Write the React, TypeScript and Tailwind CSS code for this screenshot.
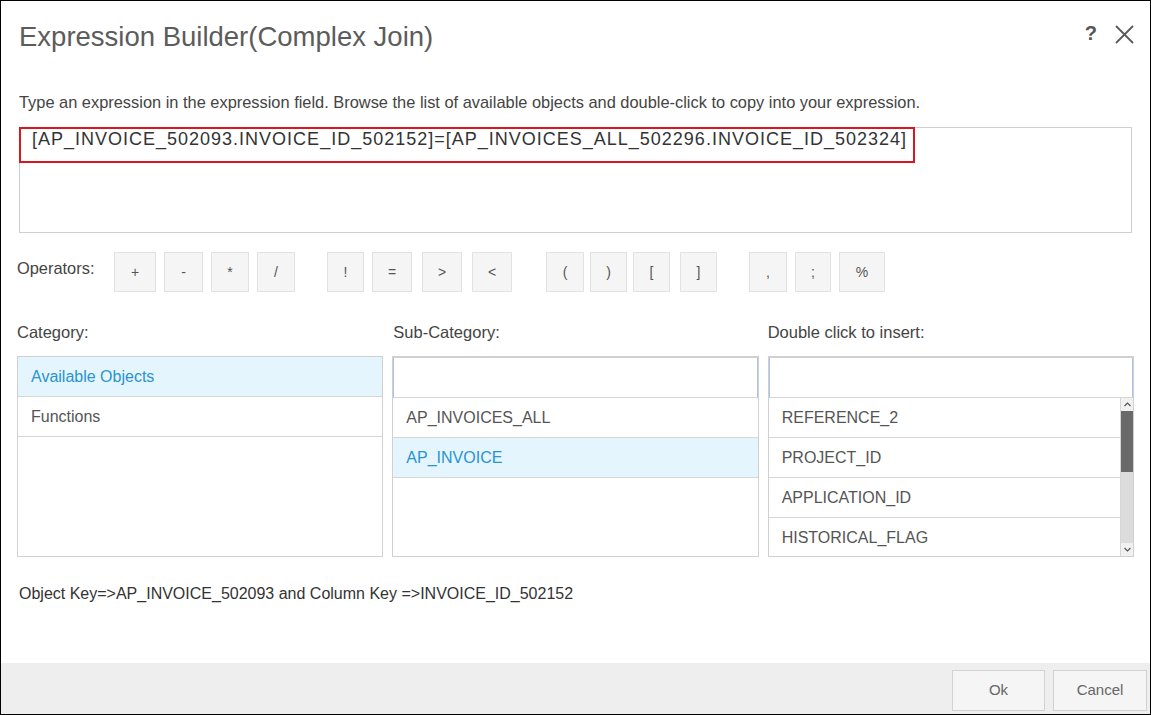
import React from "react";

const font = { fontFamily: '"Liberation Sans", Arial, sans-serif' };

type Op = { c: string; cls: string };
const groups: Op[][] = [
  [
    { c: "+", cls: "w-[42px]" },
    { c: "-", cls: "w-[39px]" },
    { c: "*", cls: "w-[38px]" },
    { c: "/", cls: "w-[38px]" },
  ],
  [
    { c: "!", cls: "w-[37px]" },
    { c: "=", cls: "w-[40px]" },
    { c: ">", cls: "w-[40px] ml-[2px]" },
    { c: "<", cls: "w-[40px] ml-[2px]" },
  ],
  [
    { c: "(", cls: "w-[38px] ml-[2px]" },
    { c: ")", cls: "w-[37px] ml-[-2px]" },
    { c: "[", cls: "w-[37px] ml-[-2px]" },
    { c: "]", cls: "w-[37px] ml-[2px]" },
  ],
  [
    { c: ",", cls: "w-[38px]" },
    { c: ";", cls: "w-[36px]" },
    { c: "%", cls: "w-[46px]" },
  ],
];

function Row({
  children,
  selected,
}: {
  children?: React.ReactNode;
  selected?: boolean;
}) {
  return (
    <div
      className={
        "h-[40px] border-b border-[#d6d6d6] flex items-center pl-[13px] text-[16px] " +
        (selected ? "bg-[#e4f5fd] text-[#2a93d0]" : "bg-white text-[#555]")
      }
    >
      {children}
    </div>
  );
}

function InputRow() {
  return (
    <div className="h-[40px] border-b border-[#d6d6d6] border-l border-r border-l-[#a9c1ec] border-r-[#a9c1ec] bg-white" />
  );
}

export default function App() {
  return (
    <div
      className="w-[1151px] h-[715px] border border-black bg-white flex flex-col text-[#444]"
      style={font}
    >
      {/* Header */}
      <div className="flex items-start justify-between pl-[18px] pr-[16px] pt-[20px]">
        <div className="text-[27.5px] leading-[32px] text-[#5c5c5c]">
          Expression Builder(Complex Join)
        </div>
        <div className="flex items-center gap-[18px] pt-[1px]">
          <span className="text-[20px] leading-[22px] font-bold text-[#555]">?</span>
          <svg width="19" height="19" viewBox="0 0 19 19" className="mt-[3px]">
            <path d="M1 1 L18 18 M18 1 L1 18" stroke="#5a5a5a" strokeWidth="1.8" fill="none" />
          </svg>
        </div>
      </div>

      {/* Description */}
      <div className="pl-[18px] mt-[39px] text-[16.4px] leading-[20px] text-[#444]">
        Type an expression in the expression field. Browse the list of available objects and
        double-click to copy into your expression.
      </div>

      {/* Expression field */}
      <div className="ml-[18px] mr-[18px] mt-[15px] h-[106px] border border-[#cfcfcf] relative">
        <div className="pl-[12px] text-[18px] leading-[22px] tracking-[1px] text-[#333]">
          [AP_INVOICE_502093.INVOICE_ID_502152]=[AP_INVOICES_ALL_502296.INVOICE_ID_502324]
        </div>
        <div className="absolute left-[-1px] top-[-1px] w-[896px] h-[36px] border-2 border-[#d8181e]" />
      </div>

      {/* Operators */}
      <div className="flex items-start pl-[16px] mt-[19px]">
        <div className="w-[97px] pt-[6px] text-[16.4px] leading-[20px] text-[#444]">Operators:</div>
        <div className="flex gap-[32px]">
          {groups.map((g, gi) => (
            <div key={gi} className="flex gap-[8px]">
              {g.map((o) => (
                <div
                  key={o.c}
                  className={
                    "h-[40px] bg-[#f5f5f5] border border-[#e2e2e2] flex items-center justify-center text-[14px] text-[#555] " +
                    o.cls
                  }
                >
                  {o.c}
                </div>
              ))}
            </div>
          ))}
        </div>
      </div>

      {/* Labels */}
      <div className="grid grid-cols-3 gap-[9px] pl-[16px] pr-[16px] mt-[30px] text-[16.5px] leading-[20px] text-[#444]">
        <div>Category:</div>
        <div className="pl-[1px]">Sub-Category:</div>
        <div>Double click to insert:</div>
      </div>

      {/* Lists */}
      <div className="grid grid-cols-3 gap-[9px] pl-[16px] pr-[16px] mt-[14px] h-[201px]">
        <div className="border border-[#d0d0d0] bg-white overflow-hidden">
          <Row selected>Available Objects</Row>
          <Row>Functions</Row>
        </div>
        <div className="border border-[#d0d0d0] border-t-2 bg-white overflow-hidden">
          <InputRow />
          <Row>AP_INVOICES_ALL</Row>
          <Row selected>AP_INVOICE</Row>
        </div>
        <div className="border border-[#d0d0d0] border-t-2 bg-white flex flex-col overflow-hidden">
          <InputRow />
          <div className="flex flex-1 min-h-0">
            <div className="flex-1 border-r border-[#d6d6d6] overflow-hidden">
              <Row>REFERENCE_2</Row>
              <Row>PROJECT_ID</Row>
              <Row>APPLICATION_ID</Row>
              <Row>HISTORICAL_FLAG</Row>
            </div>
            <div className="w-[12px] flex flex-col bg-[#dcdcdc]">
              <div className="h-[13px] bg-[#f1f1f1] flex items-center justify-center">
                <svg width="7" height="5" viewBox="0 0 7 5">
                  <path d="M0.5 4 L3.5 1 L6.5 4" stroke="#555" strokeWidth="1.2" fill="none" />
                </svg>
              </div>
              <div className="h-[61px] bg-[#6a6a6a]" />
              <div className="flex-1" />
              <div className="h-[13px] bg-[#f1f1f1] flex items-center justify-center">
                <svg width="7" height="5" viewBox="0 0 7 5">
                  <path d="M0.5 1 L3.5 4 L6.5 1" stroke="#555" strokeWidth="1.2" fill="none" />
                </svg>
              </div>
            </div>
          </div>
        </div>
      </div>

      {/* Status */}
      <div className="pl-[18px] mt-[27px] text-[16px] leading-[20px] text-[#333]">
        Object Key=&gt;AP_INVOICE_502093 and Column Key =&gt;INVOICE_ID_502152
      </div>

      <div className="flex-1" />

      {/* Footer */}
      <div className="h-[51px] bg-[#eeeeee] flex justify-end items-start pt-[7px] pr-[3px] gap-[8px]">
        <div className="w-[93px] h-[41px] bg-[#f5f5f5] border border-[#d2d2d2] flex items-center justify-center text-[15px] text-[#666]">
          Ok
        </div>
        <div className="w-[94px] h-[41px] bg-[#f5f5f5] border border-[#d2d2d2] flex items-center justify-center text-[15px] text-[#666]">
          Cancel
        </div>
      </div>
    </div>
  );
}
